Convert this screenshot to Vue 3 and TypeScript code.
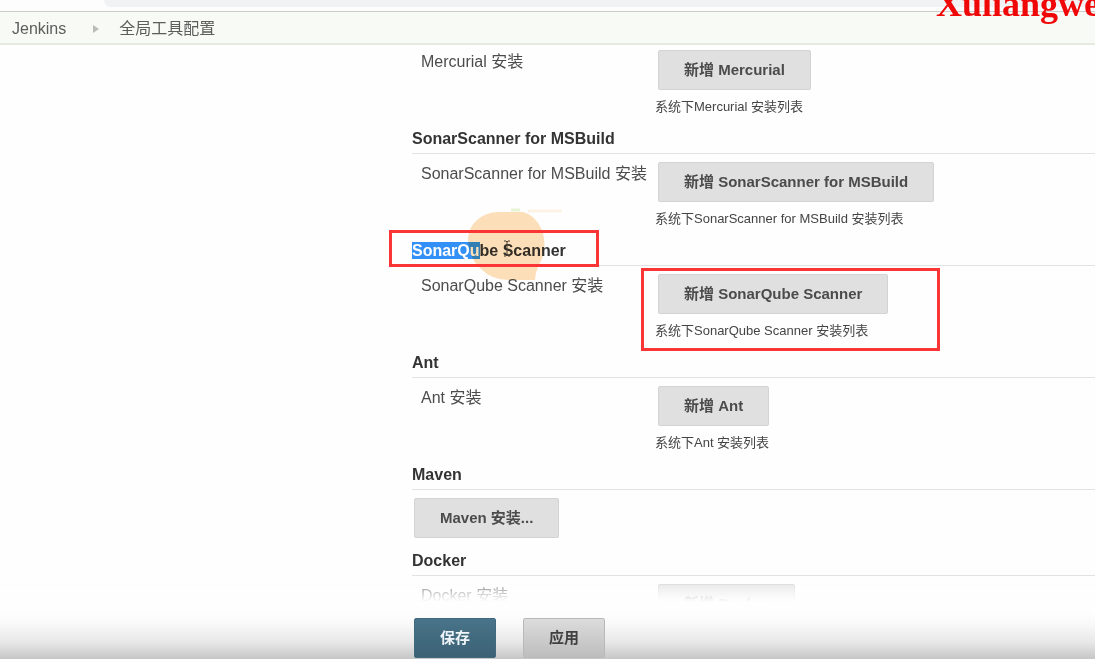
<script setup lang="ts">
interface Tool {
  name: string
  marked?: boolean
  selected?: string
  rest?: string
}

const tools: Tool[] = [
  { name: 'SonarScanner for MSBuild' },
  { name: 'SonarQube Scanner', marked: true, selected: 'SonarQu', rest: 'be Scanner' },
  { name: 'Ant' },
]
</script>

<template>
  <div class="page">
    <div class="toolbar"><span class="address"></span></div>
    <div class="watermark">Xuliangwe</div>

    <nav class="breadcrumb" aria-label="breadcrumb">
      <a href="#">Jenkins</a>
      <svg class="arrow" width="6" height="8" viewBox="0 0 6 8" aria-hidden="true">
        <path d="M0 0L6 4L0 8Z" fill="#b9bcb7" />
      </svg>
      <a href="#">全局工具配置</a>
    </nav>

    <main class="config">
      <section class="tool">
        <div class="row">
          <span class="label">Mercurial 安装</span>
          <div class="field">
            <button type="button" class="btn">新增 Mercurial</button>
            <p class="hint">系统下Mercurial 安装列表</p>
          </div>
        </div>
      </section>

      <section v-for="tool in tools" :key="tool.name" class="tool">
        <h2 class="heading">
          <template v-if="tool.marked">
            <span class="selected">{{ tool.selected }}</span>{{ tool.rest }}
            <svg class="glow" width="100" height="76" viewBox="0 0 100 76" aria-hidden="true">
              <path d="M9 14Q18 5 32 5H56Q70 9 76 26Q80 42 73 56Q69 62 68 73H44Q26 74 14 62Q2 52 1 32Q2 20 9 14Z" fill="#fde0ba" />
              <path d="M44 3H53" stroke="#e6f5d2" stroke-width="3" />
              <path d="M61 4H95" stroke="#fdf4e6" stroke-width="3" />
            </svg>
            <svg class="cursor" width="8" height="17" viewBox="0 0 8 17" aria-hidden="true">
              <path d="M1 1H3L4 2L5 1H7M4 2V15M1 16H3L4 15L5 16H7" fill="none" stroke="#4b4033" />
            </svg>
            <span class="frame heading-frame" aria-hidden="true"></span>
          </template>
          <template v-else>{{ tool.name }}</template>
        </h2>
        <div class="row">
          <span class="label">{{ tool.name }} 安装</span>
          <div class="field">
            <button type="button" class="btn">新增 {{ tool.name }}</button>
            <p class="hint">系统下{{ tool.name }} 安装列表</p>
            <span v-if="tool.marked" class="frame field-frame" aria-hidden="true"></span>
          </div>
        </div>
      </section>

      <section class="maven">
        <h2 class="heading">Maven</h2>
        <button type="button" class="btn">Maven 安装...</button>
      </section>

      <section class="tool">
        <h2 class="heading">Docker</h2>
        <div class="row">
          <span class="label">Docker 安装</span>
          <div class="field">
            <button type="button" class="btn">新增 Docker</button>
          </div>
        </div>
      </section>
    </main>

    <footer class="actions">
      <button type="button" class="btn primary">保存</button>
      <button type="button" class="btn apply">应用</button>
    </footer>
  </div>
</template>

<style>
body {
  margin: 0;
  overflow: hidden;
}
</style>

<style scoped>
.page {
  position: relative;
  height: 100vh;
  overflow: hidden;
  background: #fefefe;
  color: #333;
  font: 16px/20px "Liberation Sans", Arial, "Noto Sans CJK SC", sans-serif;
}
.toolbar {
  display: flex;
  box-sizing: border-box;
  height: 12px;
  padding-left: 104px;
  border-bottom: 1px solid #cbcdcb;
  background: #fdfdfd;
}
.address {
  flex: 1;
  height: 7px;
  border-bottom-left-radius: 7px;
  background: #f1f2f3;
}
.watermark {
  position: absolute;
  z-index: 4;
  top: -16px;
  left: 936px;
  color: #f00808;
  font: bold 36px/40px "Liberation Serif", "Times New Roman", serif;
}
.breadcrumb {
  display: flex;
  align-items: center;
  box-sizing: border-box;
  height: 33px;
  padding: 2px 0 0 12px;
  border-bottom: 2px solid #e6e9e2;
  background: #f7faf5;
}
.breadcrumb a {
  color: #5c5e5a;
  text-decoration: none;
}
.arrow {
  margin: 0 20px 0 27px;
}
.config {
  padding: 5px 0 0 412px;
}
.row {
  display: flex;
  align-items: flex-start;
  height: 79px;
}
.label {
  flex: none;
  box-sizing: border-box;
  width: 243px;
  padding: 2px 0 0 9px;
  color: #4c4c4c;
  white-space: nowrap;
}
.field {
  position: relative;
  padding-left: 3px;
}
.btn {
  display: block;
  height: 40px;
  padding: 0 25px;
  border: 1px solid #d3d3d3;
  border-radius: 2px;
  background: #e0e0e0;
  color: #4b4b4b;
  font: bold 15px/20px "Liberation Sans", Arial, "Noto Sans CJK SC", sans-serif;
  white-space: nowrap;
}
.hint {
  margin: 8px 0 0 -3px;
  color: #444;
  font-size: 13px;
  line-height: 18px;
  white-space: nowrap;
}
.heading {
  position: relative;
  height: 24px;
  margin: 0 0 8px;
  border-bottom: 1px solid #e2e2e2;
  color: #333;
  font-size: 16px;
  line-height: 20px;
}
.selected {
  background: #3390f6;
  color: #fff;
}
.glow {
  position: absolute;
  top: -34px;
  left: 55px;
  mix-blend-mode: multiply;
}
.cursor {
  position: absolute;
  top: -1px;
  left: 91px;
}
.frame {
  position: absolute;
  z-index: 2;
  box-sizing: border-box;
  border: 3px solid #fa3535;
  pointer-events: none;
}
.heading-frame {
  top: -11px;
  left: -23px;
  width: 210px;
  height: 37px;
}
.field-frame {
  top: -6px;
  left: -14px;
  width: 299px;
  height: 83px;
}
.maven {
  padding-bottom: 13px;
}
.maven .btn {
  margin-left: 2px;
}
.actions {
  position: absolute;
  z-index: 3;
  right: 0;
  bottom: 0;
  left: 0;
  display: flex;
  gap: 27px;
  padding: 38px 0 1px 414px;
  background: linear-gradient(
    rgba(254, 254, 254, 0) 0,
    rgba(254, 254, 254, 0.6) 10px,
    rgba(254, 254, 254, 0.9) 18px,
    #fefefe 22px,
    #fefefe 32px,
    #f9f9f9 44px,
    #e8e8e8 62px,
    #c6c6c6 100%
  );
}
.primary {
  border-color: #3f6a80;
  background: linear-gradient(#497489, #3b6175);
  color: #eef4f7;
}
.apply {
  border-color: #b9b9b9;
  background: linear-gradient(#dcdcdc, #bdbdbd);
  color: #404040;
}
</style>
